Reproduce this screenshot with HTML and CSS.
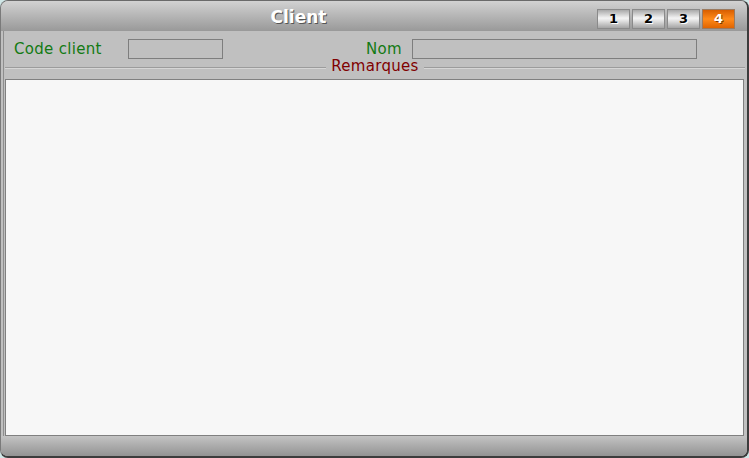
FILE: index.html
```
<!DOCTYPE html>
<html>
<head>
<meta charset="utf-8">
<link rel="stylesheet" href="styles.css">
</head>
<body>
<div class="window">
  <div class="titlebar">
    <div class="title">Client</div>
    <div class="tabs">
      <div class="tab">1</div>
      <div class="tab">2</div>
      <div class="tab">3</div>
      <div class="tab active">4</div>
    </div>
  </div>
  <div class="main">
    <div class="fields">
      <span class="label code-label">Code client</span>
      <span class="input code-input"></span>
      <span class="label nom-label">Nom</span>
      <span class="input nom-input"></span>
    </div>
    <div class="section">
      <span class="rule"></span>
      <span class="section-title">Remarques</span>
      <span class="rule"></span>
    </div>
    <div class="memo"></div>
  </div>
  <div class="footer"></div>
</div>
</body>
</html>
```
FILE: styles.css
```
html, body {
  margin: 0;
  padding: 0;
  background: #cfe6e6;
}
.window {
  width: 749px;
  height: 458px;
  box-sizing: border-box;
  border-top: 1px solid #6a6a6a;
  border-left: 1px solid #7a7a7a;
  border-right: 2px solid #3c3c3c;
  border-bottom: 2px solid #3c3c3c;
  border-radius: 8px;
  overflow: hidden;
  background: #c0c0c0;
  display: flex;
  flex-direction: column;
  font-family: "DejaVu Sans", Verdana, sans-serif;
}
.titlebar {
  height: 30px;
  flex: none;
  display: flex;
  align-items: flex-start;
  background: linear-gradient(#d2d2d2, #b8b8b8 45%, #999999);
}
.title {
  width: 595px;
  text-align: center;
  color: #ffffff;
  font-weight: bold;
  font-size: 17px;
  line-height: 20px;
  margin-top: 6px;
  text-shadow: 1px 1px 0 #555555;
}
.tabs {
  display: flex;
  gap: 2px;
  margin-left: 1px;
  margin-top: 8px;
}
.tab {
  width: 31px;
  height: 18px;
  border: 1px solid #8a8a8a;
  background: linear-gradient(#a9a9a9, #f4f4f4 45%, #e2e2e2 60%, #a5a5a5);
  font-weight: bold;
  font-size: 13px;
  line-height: 18px;
  text-align: center;
  color: #000000;
  text-shadow: 1px 1px 0 #ffffff;
}
.tab.active {
  background: linear-gradient(#d85e00, #ff8a1a 50%, #e06400);
  color: #ffffff;
  text-shadow: 1px 1px 0 #7a3a00;
  border-color: #9a7a60;
}
.main {
  flex: 1;
  display: flex;
  flex-direction: column;
  margin-left: 2px;
  border-left: 1px solid #8e8e8e;
  padding: 0 3px 0 1px;
}
.fields {
  height: 31px;
  display: flex;
  align-items: center;
  padding-top: 4px;
  box-sizing: border-box;
}
.label {
  color: #137a13;
  font-size: 15px;
  letter-spacing: 0.3px;
}
.code-label {
  margin-left: 9px;
  width: 114px;
}
.input {
  display: block;
  height: 18px;
  border: 1px solid #7e7e7e;
  background: #c0c0c0;
}
.code-input {
  width: 93px;
}
.nom-label {
  width: 179px;
  text-align: right;
  padding-right: 10px;
}
.nom-input {
  width: 283px;
}
.section {
  display: flex;
  align-items: flex-start;
  height: 16px;
  margin-right: -1px;
}
.rule {
  flex: 1;
  height: 1px;
  border-top: 1px solid #9c9c9c;
  background: #d6d6d6;
  margin-top: 5px;
}
.section-title {
  color: #800000;
  font-size: 15px;
  letter-spacing: 0.3px;
  padding: 0 5px;
  line-height: 15px;
  margin-top: -3px;
}
.memo {
  flex: 1;
  margin-top: 1px;
  background: #f7f7f7;
  border: 1px solid #808080;
}
.footer {
  height: 20px;
  flex: none;
  background: linear-gradient(#c4c4c4, #ababab 50%, #939393);
}
```
